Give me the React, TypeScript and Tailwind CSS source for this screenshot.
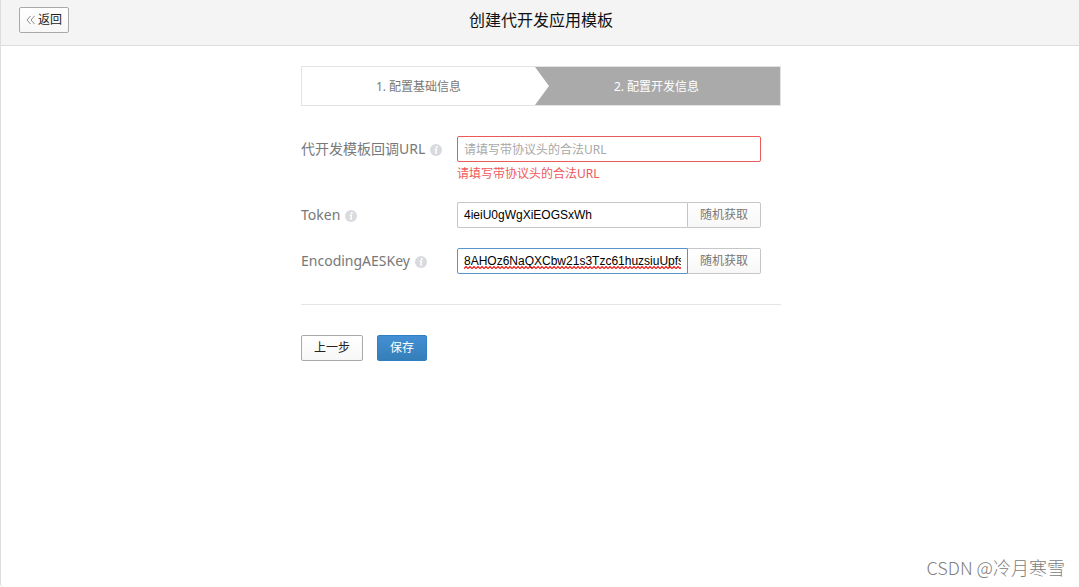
import { useState } from "react";

const SMALL_BUTTON =
  "h-[26px] rounded-xs border bg-linear-to-b from-white to-[#f7f7f7] text-xs";
const FIELD =
  "block h-[26px] min-w-0 border bg-white px-1.5 text-black outline-none";

function InfoIcon() {
  return (
    <svg viewBox="0 0 12 12" className="mt-0.5 size-3 shrink-0" aria-hidden="true">
      <circle cx="6" cy="6" r="6" fill="#d8dade" />
      <circle cx="6.8" cy="3" r="1" fill="#fff" />
      <path
        d="M4.6 5.2h1.9L5.7 9h1.2"
        fill="none"
        stroke="#fff"
        strokeWidth="1.4"
        strokeLinejoin="round"
      />
    </svg>
  );
}

function SpellingMark() {
  return (
    <svg className="pointer-events-none absolute inset-x-[7px] bottom-[5px] h-[3px] w-[calc(100%-14px)]" aria-hidden="true">
      <defs>
        <pattern id="spelling-wave" width="4" height="3" patternUnits="userSpaceOnUse">
          <path d="M-1 1.5L0 2.5L2 0.5L4 2.5L5 1.5" fill="none" stroke="#f01818" strokeWidth="1.2" />
        </pattern>
      </defs>
      <rect width="100%" height="3" fill="url(#spelling-wave)" />
    </svg>
  );
}

function FieldLabel({ htmlFor, text }: { htmlFor: string; text: string }) {
  return (
    <label
      htmlFor={htmlFor}
      className="flex h-[26px] w-[156px] shrink-0 items-center gap-[5px] text-sm text-[#787878]"
    >
      <span>{text}</span>
      <InfoIcon />
    </label>
  );
}

function Stepper() {
  return (
    <ol className="flex h-10 border border-[#e2e3e5] text-xs text-[#787878]">
      <li className="flex flex-[233] items-center justify-center pt-0.5">1. 配置基础信息</li>
      <li className="flex flex-[245] items-center bg-[#aaaaaa] text-white">
        <svg viewBox="0 0 14 38" className="h-full w-3.5" aria-hidden="true">
          <path d="M0 0L14 19L0 38Z" fill="#fff" />
        </svg>
        <span className="flex-1 pt-0.5 pr-4 text-center">2. 配置开发信息</span>
      </li>
    </ol>
  );
}

export default function App() {
  const [url, setUrl] = useState("");
  const [token, setToken] = useState("4ieiU0gWgXiEOGSxWh");
  const [aesKey, setAesKey] = useState("8AHOz6NaQXCbw21s3Tzc61huzsiuUpfsR");

  return (
    <div className="flex min-h-screen flex-col rounded-bl-sm border-l border-[#dcdddf] bg-white font-['Noto_Sans','Noto_Sans_CJK_SC',sans-serif]">
      <header className="grid h-[46px] grid-cols-[1fr_auto_1fr] items-start border-b border-[#dcdddf] bg-[#f4f4f4] pl-0.5">
        <button
          type="button"
          className={`${SMALL_BUTTON} mt-[7px] ml-4 flex w-[50px] items-center justify-center gap-[3px] border-[#a8a9aa] text-[#222]`}
        >
          <svg viewBox="0 0 9 10" className="h-2.5 w-[9px]" fill="none" stroke="#8a8d90" aria-hidden="true">
            <path d="M4.5 1L1 5L4.5 9M8.5 1L5 5L8.5 9" />
          </svg>
          返回
        </button>
        <h1 className="pt-2 text-base text-[#111]">创建代开发应用模板</h1>
      </header>

      <main className="flex-1 pt-5 pl-0.5">
        <div className="mx-auto w-full max-w-[480px]">
          <Stepper />
          <form className="pt-[30px]" onSubmit={(e) => e.preventDefault()}>
            <div className="flex flex-col gap-5 pr-5">
              <div className="flex items-start">
                <FieldLabel htmlFor="url" text="代开发模板回调URL" />
                <div className="min-w-0 flex-1">
                  <input
                    id="url"
                    value={url}
                    onChange={(e) => setUrl(e.target.value)}
                    placeholder="请填写带协议头的合法URL"
                    className={`${FIELD} w-full rounded-xs border-[#ea5a5a] text-xs placeholder:text-[#a8a8a8]`}
                  />
                  <p className="pt-1 text-xs text-[#ee5858]">请填写带协议头的合法URL</p>
                </div>
              </div>
              <div className="flex items-start">
                <FieldLabel htmlFor="token" text="Token" />
                <input
                  id="token"
                  value={token}
                  onChange={(e) => setToken(e.target.value)}
                  className={`${FIELD} flex-1 rounded-l-xs border-r-0 border-[#c4c6c8] font-['Liberation_Sans',sans-serif] text-xs`}
                />
                <button type="button" className={`${SMALL_BUTTON} w-[74px] rounded-l-none border-[#c4c6c8] text-[#787878]`}>
                  随机获取
                </button>
              </div>
              <div className="flex items-start">
                <FieldLabel htmlFor="aes-key" text="EncodingAESKey" />
                <div className="relative min-w-0 flex-1">
                  <input
                    id="aes-key"
                    value={aesKey}
                    onChange={(e) => setAesKey(e.target.value)}
                    className={`${FIELD} w-full rounded-l-xs border-[#5a94cc] font-['Liberation_Sans',sans-serif] text-xs`}
                  />
                  <SpellingMark />
                </div>
                <button type="button" className={`${SMALL_BUTTON} w-[73px] rounded-l-none border-l-0 border-[#c4c6c8] text-[#787878]`}>
                  随机获取
                </button>
              </div>
            </div>
            <div className="mt-[30px] flex gap-3.5 border-t border-[#e4e5e7] pt-[30px]">
              <button type="button" className={`${SMALL_BUTTON} w-[62px] border-[#a8a9aa] text-[#222]`}>
                上一步
              </button>
              <button
                type="submit"
                className="h-[26px] w-[50px] rounded-xs border border-[#2e7fc4] bg-linear-to-b from-[#448fd4] to-[#347fb8] text-xs text-white"
              >
                保存
              </button>
            </div>
          </form>
        </div>
      </main>

      <footer className="flex justify-end pr-3.5 pb-1.5 font-['Noto_Sans_CJK_SC',sans-serif] text-lg font-light text-[#808080]">
        CSDN @冷月寒雪
      </footer>
    </div>
  );
}
